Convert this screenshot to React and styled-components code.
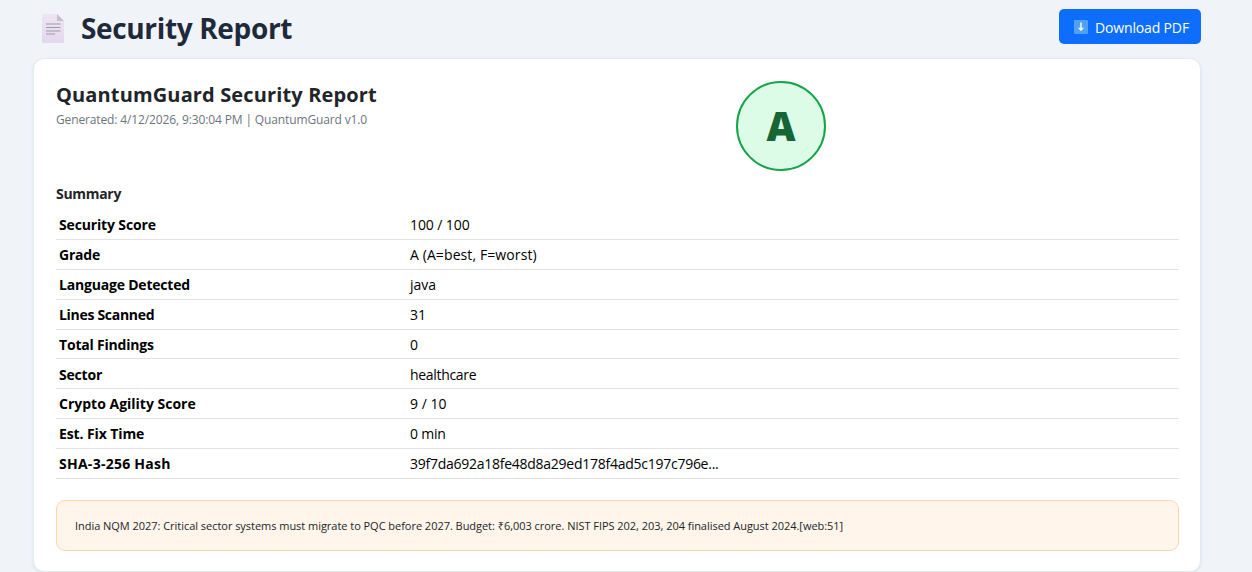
import React from 'react';
import styled, { createGlobalStyle } from 'styled-components';

const GlobalStyle = createGlobalStyle`
  * {
    box-sizing: border-box;
  }

  body {
    margin: 0;
    background: #f0f4f9;
    font-family: 'Open Sans', 'Noto Sans', sans-serif;
    color: #212529;
    overflow: hidden;
  }
`;

const Page = styled.main`
  height: 572px;
  padding: 9px 51px 0 33px;
`;

const TopBar = styled.header`
  display: flex;
  justify-content: space-between;
  align-items: flex-start;
  height: 49px;
`;

const Heading = styled.div`
  display: flex;
  align-items: center;
  gap: 17px;
  height: 39px;
  padding-left: 9px;
`;

const PageTitle = styled.h1`
  margin: 0;
  padding-bottom: 2px;
  font-size: 28px;
  line-height: 36px;
  font-weight: 700;
  letter-spacing: -0.35px;
  color: #1e293b;
  white-space: nowrap;
`;

const DownloadButton = styled.button`
  display: flex;
  align-items: center;
  gap: 7px;
  width: 142px;
  height: 35px;
  padding: 1px 0 0 15px;
  border: none;
  border-radius: 5px;
  background: #0d6efd;
  color: #fff;
  font-family: inherit;
  font-size: 14px;
  letter-spacing: -0.15px;
  white-space: nowrap;
`;

const Card = styled.section`
  height: 514px;
  padding: 22px 21px 0 22px;
  border: 1px solid #e5eaf1;
  border-radius: 11px;
  background: #fff;
  box-shadow: 0 1px 3px rgba(30, 60, 100, 0.1);
`;

const CardHead = styled.div`
  display: grid;
  grid-template-columns: 680px 90px;
  height: 103px;
`;

const ReportTitle = styled.h2`
  margin: 0;
  font-size: 20px;
  line-height: 28px;
  font-weight: 700;
  letter-spacing: 0.14px;
  white-space: nowrap;
`;

const Generated = styled.p`
  margin: 3px 0 0;
  font-size: 12px;
  line-height: 16px;
  letter-spacing: -0.13px;
  color: #6c757d;
  white-space: nowrap;
`;

const Grade = styled.div`
  display: flex;
  align-items: center;
  justify-content: center;
  width: 90px;
  height: 90px;
  padding-bottom: 2px;
  border: 2px solid #16a34a;
  border-radius: 50%;
  background: #dcfce7;
  color: #166534;
  font-size: 40px;
  font-weight: 800;
`;

const SectionTitle = styled.h3`
  margin: 0;
  font-size: 14px;
  line-height: 20px;
  font-weight: 700;
  letter-spacing: -0.3px;
`;

const Table = styled.dl`
  margin: 6px 0 0;
`;

const Row = styled.div`
  display: grid;
  grid-template-columns: 351px 1fr;
  align-items: center;
  height: 29.88px;
  padding: 1.6px 0 0 3px;
  border-bottom: 1px solid #dee2e6;
  font-size: 14px;
  line-height: 20px;
  color: #000;
`;

const Label = styled.dt`
  font-weight: 700;
  letter-spacing: ${({ $spacing }) => $spacing || 0}px;
`;

const Value = styled.dd`
  margin: 0;
  letter-spacing: ${({ $spacing }) => $spacing || 0}px;
`;

const Notice = styled.div`
  display: flex;
  align-items: center;
  height: 51px;
  margin-top: 21px;
  padding-left: 18px;
  border: 1px solid #fed7aa;
  border-radius: 9px;
  background: #fff5eb;
  font-size: 11px;
  letter-spacing: -0.035px;
  white-space: nowrap;
`;

const rows = [
  { label: 'Security Score', labelSpacing: -0.15, value: '100 / 100', valueSpacing: -0.1 },
  { label: 'Grade', labelSpacing: -0.2, value: 'A (A=best, F=worst)', valueSpacing: 0.1 },
  { label: 'Language Detected', labelSpacing: -0.2, value: 'java' },
  { label: 'Lines Scanned', labelSpacing: -0.3, value: '31' },
  { label: 'Total Findings', labelSpacing: -0.2, value: '0' },
  { label: 'Sector', labelSpacing: -0.2, value: 'healthcare', valueSpacing: -0.32 },
  { label: 'Crypto Agility Score', value: '9 / 10' },
  { label: 'Est. Fix Time', labelSpacing: -0.1, value: '0 min', valueSpacing: -0.2 },
  {
    label: 'SHA-3-256 Hash',
    labelSpacing: 0.26,
    value: '39f7da692a18fe48d8a29ed178f4ad5c197c796e...',
    valueSpacing: -0.26
  }
];

const PageIcon = () => (
  <svg width='22' height='29' viewBox='0 0 22 29'>
    <defs>
      <linearGradient id='paper' x1='0' y1='0' x2='0' y2='1'>
        <stop offset='0' stopColor='#eee5f3' />
        <stop offset='1' stopColor='#e2d8ec' />
      </linearGradient>
    </defs>
    <path d='M0 0h15l7 7v22H0z' fill='url(#paper)' />
    <path d='M15 0v7h7z' fill='#c6c0cc' />
    <path
      d='M4 10h14.5M4 13.5h14.5M4 17h14.5M4 20h9'
      stroke='#a29ba9'
      strokeWidth='1.2'
    />
  </svg>
);

const DownloadIcon = () => (
  <svg width='14' height='14' viewBox='0 0 14 14'>
    <rect width='14' height='14' rx='1' fill='#50a0f4' />
    <path
      d='M6.2 2.5h1.6v5.3h2.4L7 11.3 3.8 7.8h2.4z'
      fill='#fff'
      fillOpacity='0.9'
    />
  </svg>
);

const App = () => {
  return (
    <>
      <GlobalStyle />
      <Page>
        <TopBar>
          <Heading>
            <PageIcon />
            <PageTitle>Security Report</PageTitle>
          </Heading>
          <DownloadButton>
            <DownloadIcon />
            Download PDF
          </DownloadButton>
        </TopBar>
        <Card>
          <CardHead>
            <div>
              <ReportTitle>QuantumGuard Security Report</ReportTitle>
              <Generated>
                Generated: 4/12/2026, 9:30:04 PM | QuantumGuard v1.0
              </Generated>
            </div>
            <Grade>A</Grade>
          </CardHead>
          <SectionTitle>Summary</SectionTitle>
          <Table>
            {rows.map(row => (
              <Row key={row.label}>
                <Label $spacing={row.labelSpacing}>{row.label}</Label>
                <Value $spacing={row.valueSpacing}>{row.value}</Value>
              </Row>
            ))}
          </Table>
          <Notice>
            India NQM 2027: Critical sector systems must migrate to PQC before
            2027. Budget: ₹6,003 crore. NIST FIPS 202, 203, 204 finalised August
            2024.[web:51]
          </Notice>
        </Card>
      </Page>
    </>
  );
};

export default App;
